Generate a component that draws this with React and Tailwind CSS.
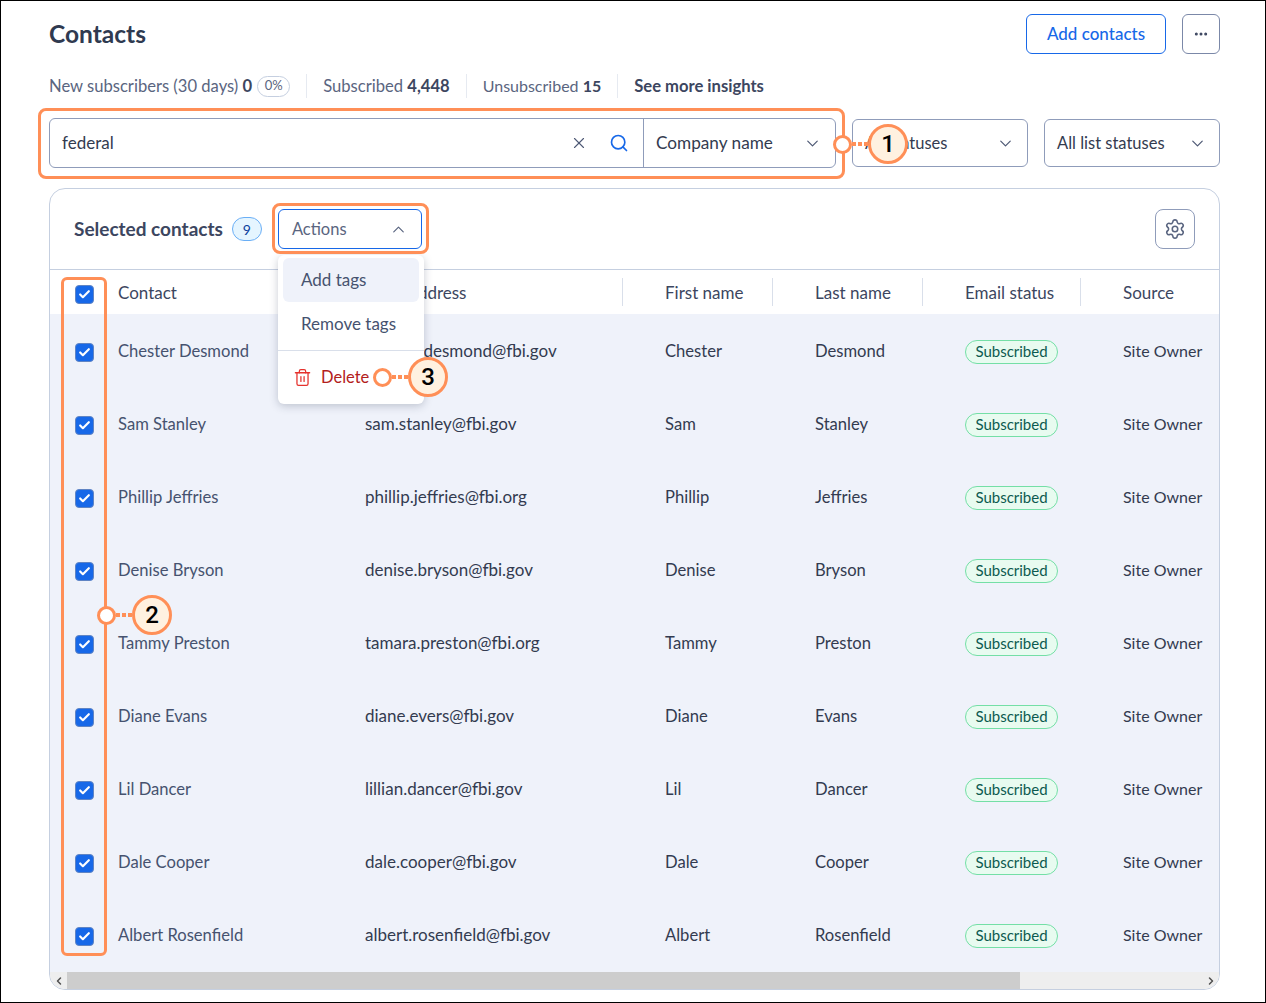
import { Check, ChevronDown, ChevronLeft, ChevronRight, ChevronUp, Ellipsis, Search, Settings, Trash2, X } from "lucide-react";

const contacts = [
  { name: "Chester Desmond", email: "chester.desmond@fbi.gov", first: "Chester", last: "Desmond" },
  { name: "Sam Stanley", email: "sam.stanley@fbi.gov", first: "Sam", last: "Stanley" },
  { name: "Phillip Jeffries", email: "phillip.jeffries@fbi.org", first: "Phillip", last: "Jeffries" },
  { name: "Denise Bryson", email: "denise.bryson@fbi.gov", first: "Denise", last: "Bryson" },
  { name: "Tammy Preston", email: "tamara.preston@fbi.org", first: "Tammy", last: "Preston" },
  { name: "Diane Evans", email: "diane.evers@fbi.gov", first: "Diane", last: "Evans" },
  { name: "Lil Dancer", email: "lillian.dancer@fbi.gov", first: "Lil", last: "Dancer" },
  { name: "Dale Cooper", email: "dale.cooper@fbi.gov", first: "Dale", last: "Cooper" },
  { name: "Albert Rosenfield", email: "albert.rosenfield@fbi.gov", first: "Albert", last: "Rosenfield" },
];

const gridCols = "grid grid-cols-[68px_247px_300px_150px_150px_158px_1fr] items-center";

const Checkbox = () => (
  <div className="ml-[25px] mt-[4px] flex h-[19px] w-[19px] items-center justify-center rounded-[4px] border border-[#5f84c4] bg-[#1768e8]">
    <Check size={13} strokeWidth={4} className="text-white" />
  </div>
);

const HeaderCell = ({ label, sep = true }) => (
  <div className="flex h-[28px] items-center justify-between whitespace-nowrap">
    <span className="pt-[1px]">{label}</span>
    {sep && <div className="mr-[42px] h-[28px] w-px bg-[#d9dfea]" />}
  </div>
);

const Dropdown = ({ label }) => (
  <div className="flex h-[48px] w-[176px] items-center justify-between rounded-md border border-[#8f9cba] pl-[12px] pr-[12px] text-[#333b50]">
    <span>{label}</span>
    <ChevronDown size={19} strokeWidth={1.5} className="text-[#4d5874]" />
  </div>
);

const Dots = () => (
  <div className="flex gap-[2px]">
    <div className="h-[4px] w-[4px] bg-[#ff8f57]" />
    <div className="h-[4px] w-[4px] bg-[#ff8f57]" />
    <div className="h-[4px] w-[4px] bg-[#ff8f57]" />
  </div>
);

// numbered callout: ring, dotted line, then the number
const Callout = ({ n, className }) => (
  <div className={`absolute flex items-center ${className}`}>
    <div className="h-[19px] w-[19px] rounded-full border-[3px] border-[#ff8f57] bg-white" />
    <div className="w-[16px]"><Dots /></div>
    <div className="flex h-[40px] w-[40px] items-center justify-center rounded-full border-[3px] border-[#ff8f57] bg-[#fff1e0] text-[24px] font-medium leading-none text-black [font-family:Roboto,sans-serif]">
      {n}
    </div>
  </div>
);

export default function App() {
  return (
    <div className="relative h-[1003px] w-[1266px] overflow-hidden border border-black bg-white pl-[48px] pr-[45px] pt-[13px] text-[16.5px] text-[#333b50] [font-family:Lato,'Noto_Sans',sans-serif]">
      <div className="flex items-center justify-between">
        <h1 className="text-[24.5px] font-bold text-[#2f3a50]">Contacts</h1>
        <div className="flex gap-[16px]">
          <button className="h-[40px] w-[140px] rounded-md border border-[#1768e8] text-[17px] font-medium text-[#1768e8]">Add contacts</button>
          <button className="flex h-[40px] w-[38px] items-center justify-center rounded-md border border-[#7b88a8]">
            <Ellipsis size={16} strokeWidth={2.5} className="text-[#3c4660]" />
          </button>
        </div>
      </div>

      <div className="mt-[20px] flex h-[24px] items-center text-[16.6px] text-[#5a6580]">
        <span>New subscribers (30 days) <b className="text-[#3c4660]">0</b></span>
        <span className="ml-[5px] flex h-[21px] w-[33px] items-center justify-center rounded-full border border-[#c5cfe0] text-[13px]">0%</span>
        <div className="mx-[16px] h-[24px] w-px bg-[#e6eaf1]" />
        <span>Subscribed <b className="text-[#3c4660]">4,448</b></span>
        <div className="mx-[16px] h-[24px] w-px bg-[#e6eaf1]" />
        <span className="text-[16px]">Unsubscribed <b className="text-[#3c4660]">15</b></span>
        <div className="mx-[16px] h-[24px] w-px bg-[#e6eaf1]" />
        <b className="text-[#3c4660]">See more insights</b>
      </div>

      <div className="mt-[20px] flex items-center justify-between">
        <div className="flex h-[50px] w-[787px] items-center rounded-md border border-[#8f9cba]">
          <span className="flex-1 pl-[12px] text-[17px]">federal</span>
          <X size={18} strokeWidth={1.5} className="mr-[21px] text-[#4d5874]" />
          <Search size={20} strokeWidth={2} className="mr-[14px] text-[#1768e8]" />
          <div className="flex h-full w-[192px] items-center justify-between border-l border-[#8f9cba] pl-[12px] pr-[13px]">
            <span className="text-[17.2px]">Company name</span>
            <ChevronDown size={19} strokeWidth={1.5} className="text-[#4d5874]" />
          </div>
        </div>
        <div className="flex gap-[16px]">
          <Dropdown label="All statuses" />
          <Dropdown label="All list statuses" />
        </div>
      </div>

      <div className="mt-[20px] h-[802px] overflow-hidden rounded-2xl border border-[#c5cfe0]">
        <div className="flex h-[81px] items-center justify-between border-b border-[#c5cfe0] pl-[24px] pr-[24px]">
          <div className="flex items-center">
            <span className="text-[19px] font-bold text-[#3c4660]">Selected contacts</span>
            <span className="ml-[9px] flex h-[24px] w-[30px] items-center justify-center rounded-full border border-[#6aaef5] bg-[#e5f5ff] text-[14px] text-[#0b3f9c]">9</span>
            <button className="ml-[16px] flex h-[40px] w-[144px] items-center justify-between rounded-md border border-[#1768e8] pl-[13px] pr-[13px] text-[#5a6580]">
              Actions
              <ChevronUp size={19} strokeWidth={1.5} />
            </button>
          </div>
          <button className="flex h-[40px] w-[40px] items-center justify-center rounded-lg border border-[#8f9cba]">
            <Settings size={22} strokeWidth={1.7} className="text-[#5a6580]" />
          </button>
        </div>

        <div className={`${gridCols} h-[44px] text-[17px] text-[#3c4660]`}>
          <Checkbox />
          <HeaderCell label="Contact" />
          <HeaderCell label="Email address" />
          <HeaderCell label="First name" />
          <HeaderCell label="Last name" />
          <HeaderCell label="Email status" />
          <HeaderCell label="Source" sep={false} />
        </div>

        <div className="bg-[#eff2fa] pb-[1px]">
          {contacts.map((c) => (
            <div key={c.email} className={`${gridCols} h-[73px] text-[16.6px]`}>
              <Checkbox />
              <span className="pt-[2px] text-[#46526f]">{c.name}</span>
              <span className="pt-[1px] text-[17px]">{c.email}</span>
              <span className="pt-[2px]">{c.first}</span>
              <span className="pt-[2px]">{c.last}</span>
              <span className="mt-[2px] flex h-[24px] w-[93px] items-center justify-center rounded-full border border-[#74dfa6] bg-[#e8fbf0] text-[15px] text-[#0c5a4f]">Subscribed</span>
              <span className="whitespace-nowrap text-[16px]">Site Owner</span>
            </div>
          ))}
        </div>

        <div className="flex h-[17px] bg-[#eeeeee]">
          <div className="flex w-[17px] items-center justify-center text-[#505050]"><ChevronLeft size={12} strokeWidth={3} /></div>
          <div className="w-[953px] bg-[#cdcdcd]" />
          <div className="flex-1" />
          <div className="flex w-[17px] items-center justify-center text-[#505050]"><ChevronRight size={12} strokeWidth={3} /></div>
        </div>
      </div>

      {/* open Actions menu */}
      <div className="absolute left-[277px] top-[254px] h-[149px] w-[146px] rounded-md bg-white pt-[3px] text-[17px] shadow-[0_2px_8px_rgba(40,50,80,0.25)]">
        <div className="mx-[5px] flex h-[44px] items-center rounded-md bg-[#eff2fa] pl-[18px] text-[#46526f]">Add tags</div>
        <div className="mx-[5px] flex h-[44px] items-center pl-[18px] text-[#46526f]">Remove tags</div>
        <div className="mt-[4px] border-t border-[#d9dfea]" />
        <div className="flex h-[52px] items-center pl-[15px] text-[16.5px] text-[#b3201c]">
          <Trash2 size={19} strokeWidth={1.6} className="text-[#e5322d]" />
          <span className="ml-[9px]">Delete</span>
        </div>
      </div>

      {/* orange annotation frames */}
      <div className="absolute left-[37px] top-[107px] h-[71px] w-[807px] rounded-lg border-[3px] border-[#ff8f57]" />
      <div className="absolute left-[60px] top-[276px] h-[679px] w-[46px] rounded-md border-[3px] border-[#ff8f57]" />
      <div className="absolute left-[271px] top-[202px] h-[51px] w-[157px] rounded-lg border-[3px] border-[#ff8f57]" />

      <Callout n="1" className="left-[832px] top-[123px]" />
      <Callout n="2" className="left-[96px] top-[594px]" />
      <Callout n="3" className="left-[372px] top-[356px]" />
    </div>
  );
}
